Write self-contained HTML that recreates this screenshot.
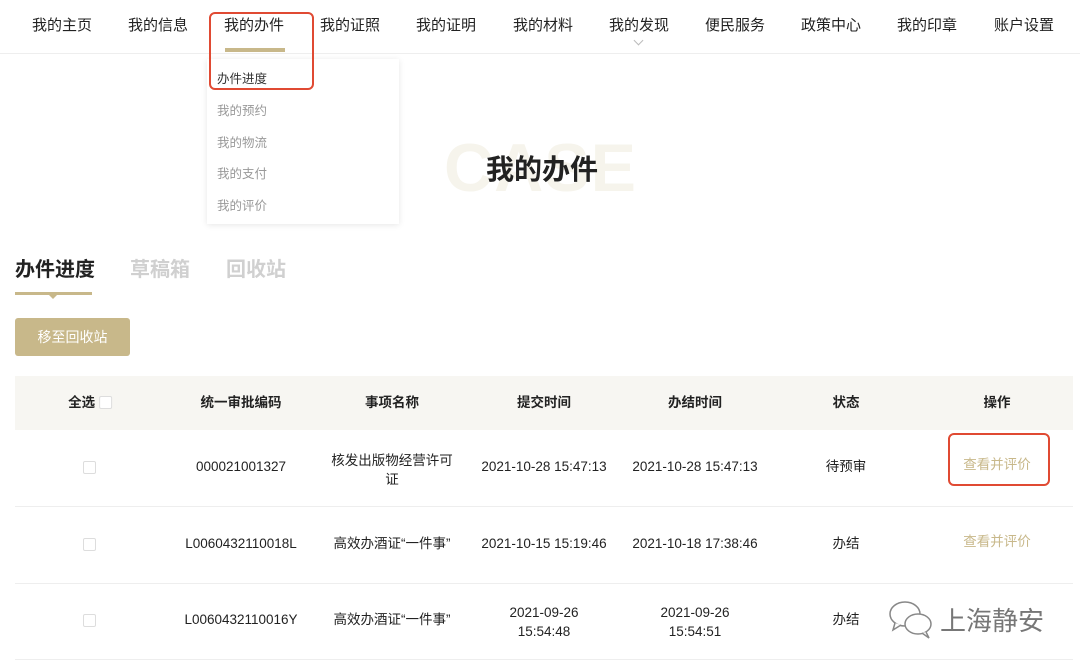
<!DOCTYPE html>
<html><head><meta charset="utf-8"><style>
*{margin:0;padding:0;box-sizing:border-box}
body{width:1080px;height:672px;background:#fff;font-family:"Liberation Sans","Noto Sans CJK SC",sans-serif;color:#222;position:relative;overflow:hidden}
.a{position:absolute;white-space:nowrap;line-height:1.2}
.nav{font-size:15px;color:#222;top:17px;transform:translateX(-50%)}
.dd{font-size:12.5px;color:#999;left:217px}
.c{transform:translateX(-50%);font-size:13.5px;text-align:center}
.cb{width:13px;height:13px;border:1px solid #ddd;border-radius:2px;background:#fff}
</style></head><body>
<div class="a nav" style="left:62px">我的主页</div>
<div class="a nav" style="left:158px">我的信息</div>
<div class="a nav" style="left:254px">我的办件</div>
<div class="a nav" style="left:350px">我的证照</div>
<div class="a nav" style="left:446px">我的证明</div>
<div class="a nav" style="left:543px">我的材料</div>
<div class="a nav" style="left:639px">我的发现</div>
<div class="a nav" style="left:735px">便民服务</div>
<div class="a nav" style="left:831px">政策中心</div>
<div class="a nav" style="left:927px">我的印章</div>
<div class="a nav" style="left:1024px">账户设置</div>
<div class="a" style="left:635px;top:37px;width:7px;height:7px;border-right:1px solid #bbb;border-bottom:1px solid #bbb;transform:rotate(45deg)"></div>
<div class="a" style="left:0;top:53px;width:1080px;height:1px;background:#eee"></div>
<div class="a" style="left:225px;top:48px;width:60px;height:4px;background:#c8b88a"></div>
<div class="a" style="left:207px;top:59px;width:192px;height:165px;background:#fff;box-shadow:0 1px 6px rgba(0,0,0,.1)"></div>
<div class="a dd" style="top:72px;color:#333">办件进度</div>
<div class="a dd" style="top:104px">我的预约</div>
<div class="a dd" style="top:136px">我的物流</div>
<div class="a dd" style="top:167px">我的支付</div>
<div class="a dd" style="top:199px">我的评价</div>
<div class="a" style="left:209px;top:12px;width:105px;height:78px;border:2.5px solid #e04a33;border-radius:6px"></div>
<div class="a" style="left:444px;top:128px;font-size:68px;font-weight:bold;color:#f6f4ec;letter-spacing:1px">CASE</div>
<div class="a" style="left:542px;top:153px;transform:translateX(-50%);font-size:28px;font-weight:bold;color:#222">我的办件</div>
<div class="a" style="left:15px;top:258px;font-size:20px;font-weight:bold;color:#222">办件进度</div>
<div class="a" style="left:130px;top:258px;font-size:20px;font-weight:bold;color:#d0d0d0">草稿箱</div>
<div class="a" style="left:226px;top:258px;font-size:20px;font-weight:bold;color:#d0d0d0">回收站</div>
<div class="a" style="left:15px;top:292px;width:77px;height:3px;background:#c8b88a"></div>
<div class="a" style="left:49px;top:295px;border:4px solid transparent;border-top-color:#c8b88a"></div>
<div class="a" style="left:15px;top:318px;width:115px;height:38px;background:#c8b88a;border-radius:3px;color:#fff;font-size:14px;line-height:38px;text-align:center">移至回收站</div>
<div class="a" style="left:15px;top:376px;width:1058px;height:54px;background:#f7f6f2"></div>
<div class="a" style="left:15px;top:506px;width:1058px;height:1px;background:#eee"></div>
<div class="a" style="left:15px;top:583px;width:1058px;height:1px;background:#eee"></div>
<div class="a" style="left:15px;top:659px;width:1058px;height:1px;background:#eee"></div>
<div class="a c" style="left:90px;top:395px;font-weight:bold">全选 <span class="cb" style="display:inline-block;vertical-align:-2px"></span></div>
<div class="a c" style="left:241px;top:395px;font-weight:bold">统一审批编码</div>
<div class="a c" style="left:392px;top:395px;font-weight:bold">事项名称</div>
<div class="a c" style="left:544px;top:395px;font-weight:bold">提交时间</div>
<div class="a c" style="left:695px;top:395px;font-weight:bold">办结时间</div>
<div class="a c" style="left:846px;top:395px;font-weight:bold">状态</div>
<div class="a c" style="left:997px;top:395px;font-weight:bold">操作</div>
<div class="a cb" style="left:83px;top:461px"></div>
<div class="a c" style="left:241px;top:459px">000021001327</div>
<div class="a c" style="left:392px;top:451px;line-height:19px">核发出版物经营许可<br>证</div>
<div class="a c" style="left:544px;top:459px">2021-10-28 15:47:13</div>
<div class="a c" style="left:695px;top:459px">2021-10-28 15:47:13</div>
<div class="a c" style="left:846px;top:459px">待预审</div>
<div class="a c" style="left:997px;top:457px;color:#c8b88a">查看并评价</div>
<div class="a" style="left:948px;top:433px;width:102px;height:53px;border:2.5px solid #e04a33;border-radius:6px"></div>
<div class="a cb" style="left:83px;top:538px"></div>
<div class="a c" style="left:241px;top:536px">L0060432110018L</div>
<div class="a c" style="left:392px;top:536px">高效办酒证“一件事”</div>
<div class="a c" style="left:544px;top:536px">2021-10-15 15:19:46</div>
<div class="a c" style="left:695px;top:536px">2021-10-18 17:38:46</div>
<div class="a c" style="left:846px;top:536px">办结</div>
<div class="a c" style="left:997px;top:534px;color:#c8b88a">查看并评价</div>
<div class="a cb" style="left:83px;top:614px"></div>
<div class="a c" style="left:241px;top:612px">L0060432110016Y</div>
<div class="a c" style="left:392px;top:612px">高效办酒证“一件事”</div>
<div class="a c" style="left:544px;top:603px;line-height:19px">2021-09-26<br>15:54:48</div>
<div class="a c" style="left:695px;top:603px;line-height:19px">2021-09-26<br>15:54:51</div>
<div class="a c" style="left:846px;top:612px">办结</div>
<svg class="a" style="left:888px;top:600px" width="48" height="40" viewBox="0 0 48 40" fill="#fff" stroke="#888" stroke-width="1.5"><ellipse cx="17" cy="14" rx="15" ry="12"/><path d="M7 23 L5 30 L13 25"/><ellipse cx="30" cy="24" rx="13" ry="10"/><path d="M38 32 L41 38 L34 33"/></svg>
<div class="a" style="left:940px;top:606px;font-size:26px;color:#777">上海静安</div>
</body></html>
